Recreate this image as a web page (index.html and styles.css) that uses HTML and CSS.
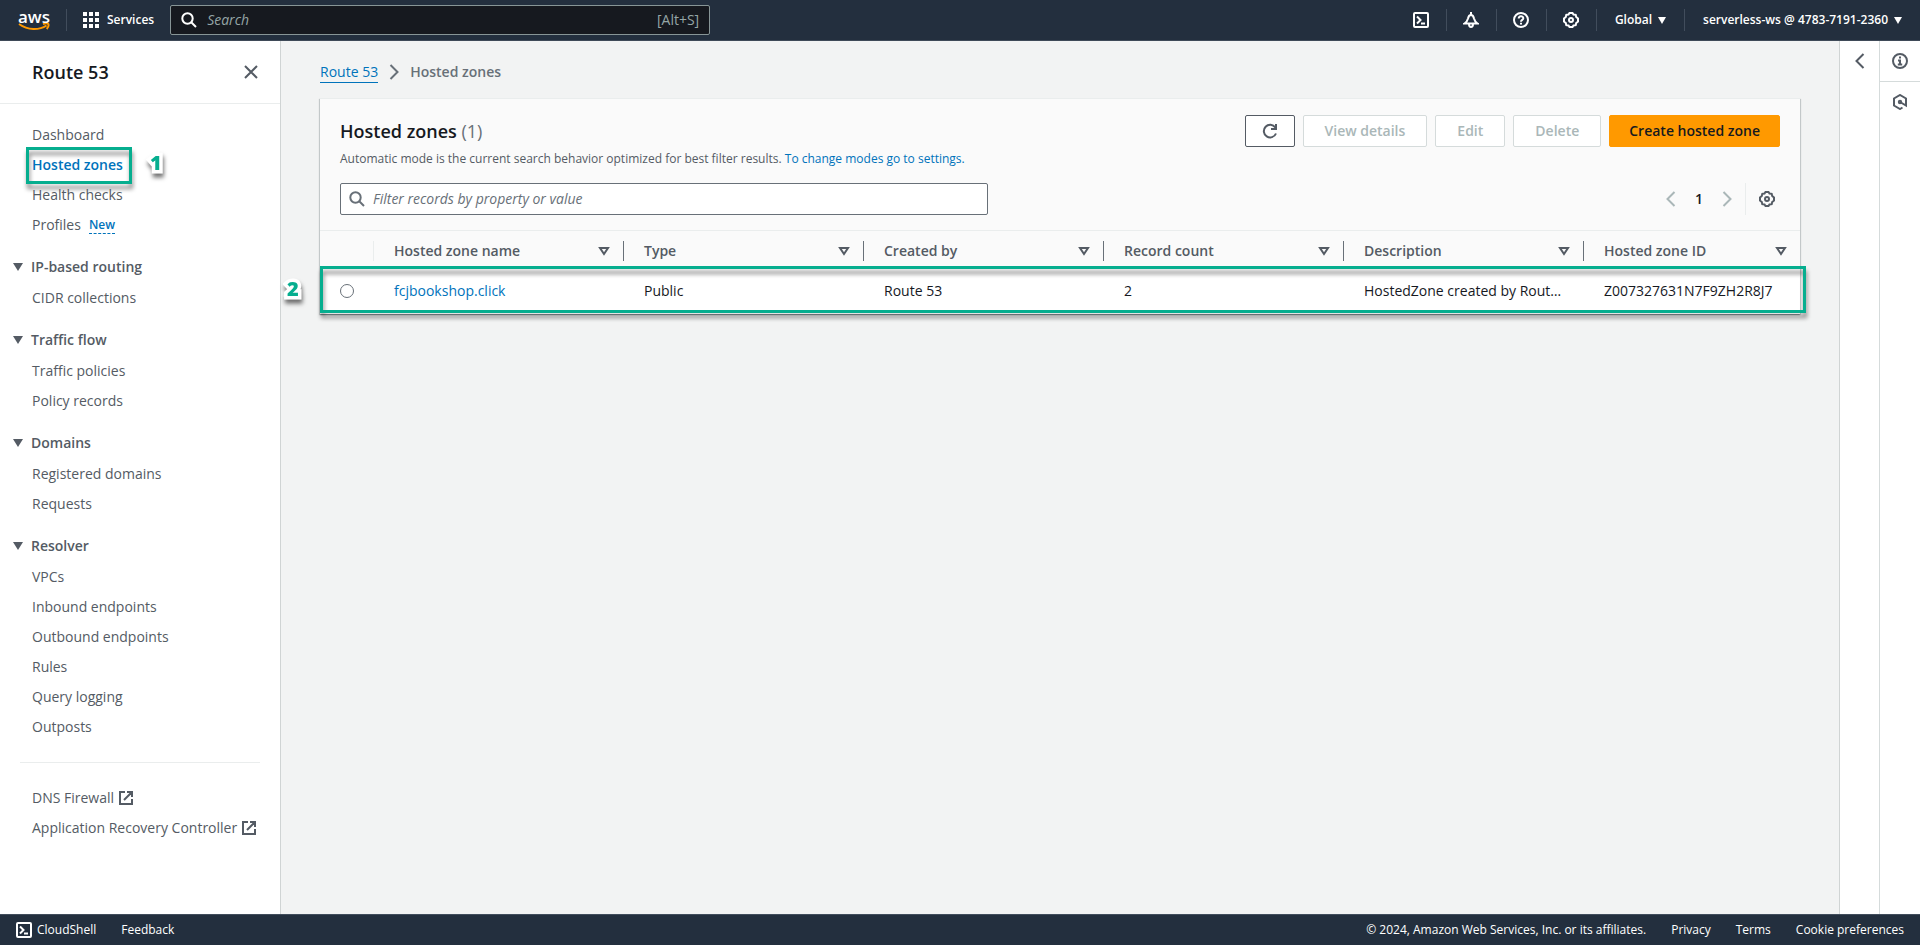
FILE: index.html
```html
<!DOCTYPE html>
<html lang="en">
<head>
<meta charset="utf-8">
<title>Route 53 - Hosted zones</title>
<link rel="stylesheet" href="styles.css">
</head>
<body>
<svg class="sprite" aria-hidden="true">
  <symbol id="i-shell" viewBox="0 0 16 16"><rect x="1" y="1" width="14" height="14" rx="1"/><path d="M4 4.500 7.500 8 4 11.500M8 11.500h4"/></symbol>
  <symbol id="i-gear" viewBox="0 0 16 16"><path d="M6.500 1h3l1 1.500 2.200.3.500 2.200L15 6.500v3L13.200 11l-.5 2.200-2.200.3-1 1.500h-3l-1-1.500-2.200-.3L2.800 11 1 9.500v-3L2.800 5l.5-2.200 2.200-.3z"/><circle cx="8" cy="8" r="2"/></symbol>
  <symbol id="i-search" viewBox="0 0 16 16"><circle cx="6.500" cy="6.500" r="5.200"/><path d="m10.500 10.500 4.500 4.500"/></symbol>
  <symbol id="i-sort" viewBox="0 0 16 16"><path d="M4 5h8L8 11z"/></symbol>
  <symbol id="i-caret" viewBox="0 0 16 16"><path d="M3 4h10l-5 8z" fill="currentColor" stroke="none"/></symbol>
  <symbol id="i-ext" viewBox="0 0 16 16"><path d="M7 2H2v12h12V9M9 2h5v5M14 2 6 10"/></symbol>
  <symbol id="i-left" viewBox="0 0 16 16"><path d="m11.500 1-7 7 7 7"/></symbol>
  <symbol id="i-right" viewBox="0 0 16 16"><path d="m4.500 1 7 7-7 7"/></symbol>
</svg>

<header class="topbar">
  <a class="logo" href="#" aria-label="AWS home">
    <span class="logo-text">aws</span>
    <svg class="logo-smile" viewBox="0 0 32 8"><path d="M1 1c9 6.500 20 6.500 27.500 1.500" /><path d="M25 1.200c2-.9 4.500-.9 5.300-.2.500 1-.3 3.500-1.600 5"/></svg>
  </a>
  <span class="bar-line"></span>
  <button class="bar-btn services" type="button">
    <svg class="icon" viewBox="0 0 16 16"><path class="solid" d="M0 0h4v4H0zM6 0h4v4H6zM12 0h4v4h-4zM0 6h4v4H0zM6 6h4v4H6zM12 6h4v4h-4zM0 12h4v4H0zM6 12h4v4H6zM12 12h4v4h-4z"/></svg>
    Services
  </button>
  <label class="bar-search">
    <svg class="icon"><use href="#i-search"/></svg>
    <input type="text" placeholder="Search" aria-label="Search">
    <span>[Alt+S]</span>
  </label>
  <div class="bar-right">
    <button class="bar-btn ib" type="button" aria-label="CloudShell"><svg class="icon"><use href="#i-shell"/></svg></button>
    <span class="bar-line"></span>
    <button class="bar-btn ib" type="button" aria-label="Notifications"><svg class="icon" viewBox="0 0 16 16"><path d="M8 0v3M1.500 11.500h13C12 10 11.500 8.500 11 6.500 10.500 4 9.500 3 8 3S5.500 4 5 6.500C4.500 8.500 4 10 1.500 11.500zM6 12c0 4 4 4 4 0"/></svg></button>
    <span class="bar-line"></span>
    <button class="bar-btn ib" type="button" aria-label="Help"><svg class="icon" viewBox="0 0 16 16"><circle cx="8" cy="8" r="7"/><path d="M5.700 6.500C5.700 3.500 10.300 3.500 10.300 6.200 10.300 8 8 7.800 8 9.700M8 10.800v1.700"/></svg></button>
    <span class="bar-line"></span>
    <button class="bar-btn ib" type="button" aria-label="Settings"><svg class="icon"><use href="#i-gear"/></svg></button>
    <span class="bar-line"></span>
    <button class="bar-btn txt" type="button">Global <svg class="caret" viewBox="0 0 8 7"><path class="solid" d="M0 0h8L4 7z"/></svg></button>
    <span class="bar-line"></span>
    <button class="bar-btn txt" type="button">serverless-ws @ 4783-7191-2360 <svg class="caret" viewBox="0 0 8 7"><path class="solid" d="M0 0h8L4 7z"/></svg></button>
  </div>
</header>

<div class="shell">
  <nav class="side" aria-label="Route 53">
    <div class="side-head">
      <h2>Route 53</h2>
      <button class="plain" type="button" aria-label="Close"><svg class="icon" viewBox="0 0 16 16"><path d="m2 2 12 12M14 2 2 14"/></svg></button>
    </div>
    <div class="side-body">
      <ul>
        <li><a href="#">Dashboard</a></li>
        <li><a class="active" href="#">Hosted zones</a><span class="callout callout-1"></span><span class="num num-1">1</span></li>
        <li><a href="#">Health checks</a></li>
        <li><a href="#">Profiles</a><button class="new" type="button">New</button></li>
      </ul>
      <h3><svg class="icon"><use href="#i-caret"/></svg>IP-based routing</h3>
      <ul>
        <li><a href="#">CIDR collections</a></li>
      </ul>
      <h3><svg class="icon"><use href="#i-caret"/></svg>Traffic flow</h3>
      <ul>
        <li><a href="#">Traffic policies</a></li>
        <li><a href="#">Policy records</a></li>
      </ul>
      <h3><svg class="icon"><use href="#i-caret"/></svg>Domains</h3>
      <ul>
        <li><a href="#">Registered domains</a></li>
        <li><a href="#">Requests</a></li>
      </ul>
      <h3><svg class="icon"><use href="#i-caret"/></svg>Resolver</h3>
      <ul>
        <li><a href="#">VPCs</a></li>
        <li><a href="#">Inbound endpoints</a></li>
        <li><a href="#">Outbound endpoints</a></li>
        <li><a href="#">Rules</a></li>
        <li><a href="#">Query logging</a></li>
        <li><a href="#">Outposts</a></li>
      </ul>
      <hr>
      <ul>
        <li><a href="#">DNS Firewall <svg class="icon"><use href="#i-ext"/></svg></a></li>
        <li><a href="#">Application Recovery Controller <svg class="icon"><use href="#i-ext"/></svg></a></li>
      </ul>
    </div>
  </nav>

  <main class="main">
    <div class="crumbs">
      <a href="#">Route 53</a>
      <svg class="icon"><use href="#i-right"/></svg>
      <span>Hosted zones</span>
    </div>
    <section class="card">
      <div class="card-head">
        <div class="title-row">
          <h1>Hosted zones <span>(1)</span></h1>
          <div class="actions">
            <button class="btn refresh" type="button" aria-label="Refresh"><svg class="icon" viewBox="0 0 16 16"><path d="M14 10.500A6.300 6.300 0 1 1 13.300 4.500M14 1v5H9"/></svg></button>
            <button class="btn" type="button" disabled>View details</button>
            <button class="btn" type="button" disabled>Edit</button>
            <button class="btn" type="button" disabled>Delete</button>
            <button class="btn primary" type="button">Create hosted zone</button>
          </div>
        </div>
        <p class="hint">Automatic mode is the current search behavior optimized for best filter results. <a href="#">To change modes go to settings.</a></p>
        <div class="tools">
          <label class="filter">
            <svg class="icon"><use href="#i-search"/></svg>
            <input type="text" placeholder="Filter records by property or value" aria-label="Filter records">
          </label>
          <div class="pager">
            <button class="plain off" type="button" aria-label="Previous page"><svg class="icon"><use href="#i-left"/></svg></button>
            <button class="plain page" type="button">1</button>
            <button class="plain off" type="button" aria-label="Next page"><svg class="icon"><use href="#i-right"/></svg></button>
            <button class="plain prefs" type="button" aria-label="Preferences"><svg class="icon"><use href="#i-gear"/></svg></button>
          </div>
        </div>
      </div>
      <div class="table-wrap">
        <table>
          <colgroup><col class="c-pick"><col class="c-name"><col class="c-mid"><col class="c-mid"><col class="c-mid"><col class="c-mid"><col></colgroup>
          <thead>
            <tr>
              <th><div class="th pick"></div></th>
              <th><div class="th">Hosted zone name<svg class="icon"><use href="#i-sort"/></svg></div></th>
              <th><div class="th">Type<svg class="icon"><use href="#i-sort"/></svg></div></th>
              <th><div class="th">Created by<svg class="icon"><use href="#i-sort"/></svg></div></th>
              <th><div class="th">Record count<svg class="icon"><use href="#i-sort"/></svg></div></th>
              <th><div class="th">Description<svg class="icon"><use href="#i-sort"/></svg></div></th>
              <th><div class="th last">Hosted zone ID<svg class="icon"><use href="#i-sort"/></svg></div></th>
            </tr>
          </thead>
          <tbody>
            <tr>
              <td><input type="radio" name="zone" aria-label="Select fcjbookshop.click"></td>
              <td><a href="#">fcjbookshop.click</a></td>
              <td>Public</td>
              <td>Route 53</td>
              <td>2</td>
              <td>HostedZone created by Rout…</td>
              <td class="id">Z007327631N7F9ZH2R8J7</td>
            </tr>
          </tbody>
        </table>
        <span class="callout callout-2"></span><span class="num num-2">2</span>
      </div>
    </section>
  </main>

  <aside class="collapse"><button class="plain" type="button" aria-label="Open panel"><svg class="icon"><use href="#i-left"/></svg></button></aside>
  <aside class="rail">
    <button class="plain" type="button" aria-label="Info"><svg class="icon" viewBox="0 0 16 16"><circle cx="8" cy="8" r="7"/><path d="M8 3.500v2M6 7.500h2v4M5.800 11.500h4.400"/></svg></button>
    <button class="plain" type="button" aria-label="Tutorials"><svg class="icon" viewBox="0 0 16 16"><path d="M10.500 13.500 8 15l-6-3.500v-7L8 1l6 3.500v7L8 8"/><circle cx="8" cy="8" r="1.200"/></svg></button>
  </aside>
</div>

<footer class="foot">
  <button class="bar-btn" type="button"><svg class="icon"><use href="#i-shell"/></svg>CloudShell</button>
  <button class="bar-btn" type="button">Feedback</button>
  <span class="copy">© 2024, Amazon Web Services, Inc. or its affiliates.</span>
  <a href="#">Privacy</a>
  <a href="#">Terms</a>
  <a href="#">Cookie preferences</a>
</footer>
</body>
</html>
```
FILE: styles.css
```css
* { box-sizing: border-box; }
body {
  margin: 0;
  min-height: 100vh;
  display: flex;
  flex-direction: column;
  font: 14px/22px "Open Sans", "Noto Sans", sans-serif;
  color: #16191f;
  background: #f2f3f3;
}
ul, h1, h2, h3, p { margin: 0; padding: 0; }
ul { list-style: none; }
a { color: #0073bb; text-decoration: none; }
button, input { font: inherit; color: inherit; }
button { padding: 0; border: 0; background: none; }
.sprite { position: absolute; width: 0; height: 0; }
.icon {
  width: 16px;
  height: 16px;
  flex: none;
  fill: none;
  stroke: currentColor;
  stroke-width: 2;
}
.solid { fill: currentColor; stroke: none; }
.plain { display: flex; align-items: center; justify-content: center; color: #545b64; }

.topbar {
  height: 41px;
  display: flex;
  align-items: center;
  background: #232f3e;
  border-bottom: 1px solid #3f4a58;
  color: #fff;
  font-size: 12px;
}
.logo { width: 32px; margin: 0 16px 0 18px; display: flex; flex-direction: column; align-items: center; color: #fff; }
.logo-text { font: 600 17px/13px "Open Sans", sans-serif; }
.logo-smile { width: 32px; height: 8px; fill: none; stroke: #ff9900; stroke-width: 2; }
.bar-line { width: 1px; height: 22px; background: #414d5c; }
.bar-btn { display: flex; align-items: center; gap: 8px; font-weight: 500; }
.services { margin: 0 16px; font-weight: 600; }
.bar-search {
  flex: none;
  width: 540px;
  height: 30px;
  padding: 0 10px;
  display: flex;
  align-items: center;
  gap: 10px;
  background: #16191f;
  border: 1px solid #879596;
  border-radius: 2px;
  font-size: 14px;
}
.bar-search input { flex: 1; min-width: 0; padding: 0; border: 0; background: none; }
.bar-search input::placeholder { color: #95a5a6; font-style: italic; opacity: 1; }
.bar-search span { color: #95a5a6; }
.bar-right { margin-left: auto; display: flex; align-items: center; }
.ib { width: 49px; justify-content: center; }
.txt { padding: 0 18px; gap: 6px; font-weight: 600; }
.caret { width: 8px; height: 7px; }

.shell { flex: 1; display: flex; }
.side { width: 281px; flex: none; background: #fff; border-right: 1px solid #d0d4d4; color: #545b64; }
.side-head {
  height: 63px;
  padding: 0 21px 0 32px;
  display: flex;
  align-items: center;
  justify-content: space-between;
  border-bottom: 1px solid #eaeded;
}
.side-head h2 { font-size: 18px; line-height: 20px; font-weight: 600; color: #16191f; }
.side-body { padding: 16px 20px; }
.side li { height: 30px; padding-left: 12px; display: flex; align-items: center; gap: 8px; position: relative; }
.side li a { color: #545b64; display: flex; align-items: center; gap: 4px; }
.side li a.active { color: #0073bb; font-weight: 600; }
.side h3 { margin: 16px 0 5px -10px; display: flex; align-items: center; gap: 5px; font-size: 14px; font-weight: 600; line-height: 22px; }
.side hr { height: 1px; margin: 20px 0; border: 0; background: #eaeded; }
.new { color: #0073bb; font-size: 12px; line-height: 17px; font-weight: 600; border-bottom: 1px dashed #0073bb; }

.callout { position: absolute; border: 3px solid #06ae8f; pointer-events: none; filter: drop-shadow(1px 5px 2px rgba(0, 0, 0, .45)); }
.callout-1 { left: 6px; top: -3px; width: 106px; height: 37px; }
.callout-2 { left: 0; right: -6px; top: 35px; height: 47px; }
.num {
  position: absolute;
  color: #06ae8f;
  font: 800 20px/24px "Open Sans", sans-serif;
  -webkit-text-stroke: 7px #fff;
  paint-order: stroke fill;
  filter: drop-shadow(1px 4px 2px rgba(0, 0, 0, .55));
}
.num-1 { left: 130px; top: 1px; }
.num-2 { left: -33px; top: 46px; }

.main { flex: 1; min-width: 0; padding: 20px 39px; }
.crumbs { display: flex; align-items: center; gap: 8px; color: #687078; font-weight: 600; }
.crumbs a { font-weight: 400; line-height: 20px; border-bottom: 1px solid #0073bb; }
.card { margin-top: 15px; background: #fff; border-top: 1px solid #eaeded; box-shadow: 0 1px 1px rgba(0, 28, 36, .3), 1px 1px 1px rgba(0, 28, 36, .15), -1px 1px 1px rgba(0, 28, 36, .15); }
.card-head { padding: 16px 20px 15px; background: #fafafa; border-bottom: 1px solid #eaeded; }
.title-row { display: flex; align-items: center; justify-content: space-between; }
h1 { font-size: 18px; font-weight: 600; }
h1 span { font-weight: 400; color: #687078; }
.actions { display: flex; gap: 8px; }
.btn { height: 32px; padding: 0 20px; border: 1px solid #545b64; border-radius: 2px; background: #fff; font-weight: 600; color: #545b64; display: flex; align-items: center; }
.btn:disabled { padding: 0 21px; color: #aab7b8; border-color: #d5dbdb; }
.refresh { width: 50px; padding: 0 16px; }
.btn.primary { padding: 0 19px; background: #ff9900; border-color: #ff9900; color: #16191f; }
.hint { margin-top: 4px; font-size: 12px; line-height: 16px; color: #545b64; }
.tools { margin-top: 16px; display: flex; justify-content: space-between; }
.filter { width: 648px; height: 32px; padding: 0 8px; display: flex; align-items: center; gap: 8px; background: #fff; border: 1px solid #687078; border-radius: 2px; color: #687078; }
.filter input { flex: 1; padding: 0; border: 0; background: none; }
.filter input::placeholder { color: #687078; font-style: italic; opacity: 1; }
.pager { display: flex; align-items: stretch; }
.pager .plain { width: 28px; }
.pager .off { color: #aab7b8; }
.pager .page { color: #16191f; font-weight: 600; }
.pager .prefs { width: 35px; margin-left: 4px; padding-left: 8px; border-left: 1px solid #eaeded; }

.table-wrap { position: relative; }
table { width: 100%; table-layout: fixed; border-collapse: collapse; }
.c-pick { width: 54px; }
.c-name { width: 250px; }
.c-mid { width: 240px; }
th { padding: 10px 0 6px; background: #fafafa; text-align: left; font-weight: 600; color: #545b64; }
.th { height: 20px; padding: 0 11px 0 20px; display: flex; align-items: center; justify-content: space-between; border-right: 1px solid #687078; white-space: nowrap; }
.th.pick { border-color: #eaeded; }
.th.last { border: 0; }
td { height: 46px; padding: 0 20px; border-top: 1px solid #eaeded; white-space: nowrap; }
td.id { padding-right: 0; }
td input { appearance: none; display: block; width: 14px; height: 14px; margin: 0; border: 1px solid #687078; border-radius: 50%; background: #fff; }

.collapse { width: 40px; flex: none; background: #fff; border-left: 1px solid #d0d4d4; }
.collapse .plain, .rail .plain { width: 100%; height: 40px; }
.rail { width: 41px; flex: none; background: #fff; border-left: 1px solid #d5dbdb; }
.rail .plain:first-child { height: 41px; border-bottom: 1px solid #d5dbdb; }

.foot { height: 31px; padding: 0 16px; display: flex; align-items: center; gap: 25px; background: #232f3e; border-top: 1px solid #414d5c; color: #fff; font-size: 12px; font-weight: 500; }
.foot a { color: #fff; }
.foot .bar-btn { gap: 5px; }
.copy { margin-left: auto; }
```
